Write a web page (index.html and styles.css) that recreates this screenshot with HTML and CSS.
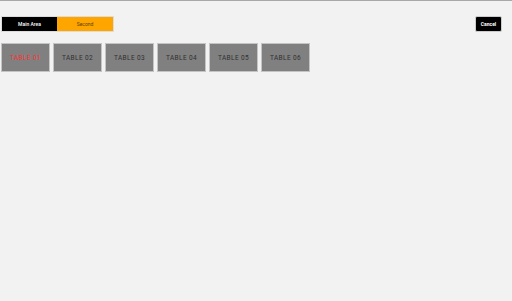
FILE: index.html
```html
<!DOCTYPE html>
<html>
<head>
<meta charset="utf-8">
<link rel="stylesheet" href="styles.css">
</head>
<body>
<div class="page">
  <div class="topbar">
    <div class="tabs">
      <div class="tab tab-main">Main Area</div>
      <div class="tab tab-second">Second</div>
    </div>
    <button class="cancel">Cancel</button>
  </div>
  <div class="tables">
    <div class="table active">TABLE 01</div>
    <div class="table">TABLE 02</div>
    <div class="table">TABLE 03</div>
    <div class="table">TABLE 04</div>
    <div class="table">TABLE 05</div>
    <div class="table">TABLE 06</div>
  </div>
</div>
</body>
</html>
```
FILE: styles.css
```css
html, body {
  margin: 0;
  padding: 0;
  background: #f2f2f2;
  font-family: Roboto, "Liberation Sans", sans-serif;
}
.page {
  border-top: 1px solid #a8a8a8;
  height: 300px;
}
.topbar {
  display: flex;
  justify-content: space-between;
  align-items: center;
  padding: 15px 10px 0 1px;
}
.tabs {
  display: flex;
  border: 1px solid #dcdcdc;
}
.tab {
  width: 56px;
  height: 14px;
  display: flex;
  align-items: center;
  justify-content: center;
  font-size: 5px;
}
.tab-main {
  background: #000;
  color: #fff;
  font-weight: 500;
  width: 55px;
}
.tab-second {
  background: #ffa500;
  color: #5a4000;
}
.cancel {
  background: #000;
  color: #fff;
  border: 1px solid #ccc;
  border-radius: 2px;
  font-family: Roboto, "Liberation Sans", sans-serif;
  font-size: 5px;
  font-weight: 700;
  width: 27px;
  height: 16px;
  padding: 0;
}
.tables {
  display: flex;
  gap: 3px;
  padding: 11px 0 0 1px;
}
.table {
  width: 47px;
  height: 27px;
  background: #808080;
  border: 1px solid #c4c4c4;
  display: flex;
  align-items: center;
  justify-content: center;
  padding-top: 1px;
  box-sizing: content-box;
  height: 26px;
  font-size: 6.5px;
  letter-spacing: 0.4px;
  color: #303030;
}
.table.active {
  color: #ff3030;
}
```
